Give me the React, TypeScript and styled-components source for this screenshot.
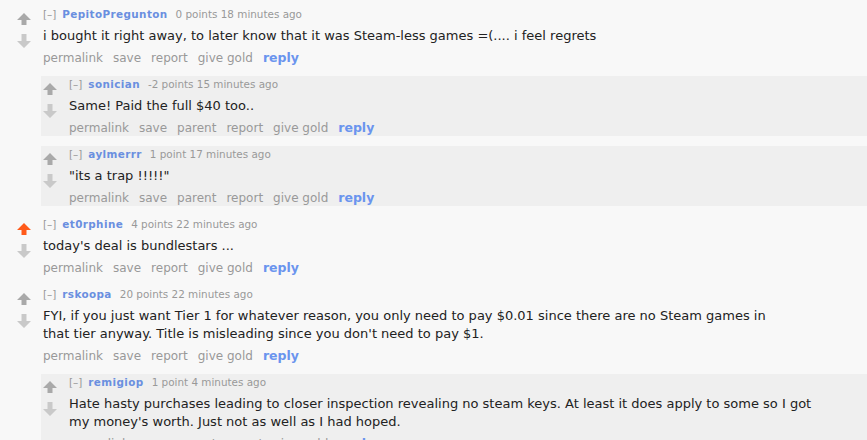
import React from "react";
import styled, { createGlobalStyle } from "styled-components";

const Global = createGlobalStyle`
  html, body { margin: 0; padding: 0; background: #f8f8f8; }
  body { font-family: "DejaVu Sans", Verdana, sans-serif; overflow: hidden; }
`;

type C = {
  author: string;
  score: string;
  time: string;
  body: string;
  upvoted?: boolean;
  parent?: boolean;
  children?: C[];
};

const data: C[] = [
  {
    author: "PepitoPregunton",
    score: "0 points",
    time: "18 minutes ago",
    body: "i bought it right away, to later know that it was Steam-less games =(.... i feel regrets",
    children: [
      { author: "sonician", score: "-2 points", time: "15 minutes ago", body: "Same! Paid the full $40 too..", parent: true },
      { author: "aylmerrr", score: "1 point", time: "17 minutes ago", body: "\"its a trap !!!!!\"", parent: true },
    ],
  },
  {
    author: "et0rphine",
    score: "4 points",
    time: "22 minutes ago",
    body: "today's deal is bundlestars ...",
    upvoted: true,
  },
  {
    author: "rskoopa",
    score: "20 points",
    time: "22 minutes ago",
    body: "FYI, if you just want Tier 1 for whatever reason, you only need to pay $0.01 since there are no Steam games in that tier anyway. Title is misleading since you don't need to pay $1.",
    children: [
      {
        author: "remigiop",
        score: "1 point",
        time: "4 minutes ago",
        body: "Hate hasty purchases leading to closer inspection revealing no steam keys. At least it does apply to some so I got my money's worth. Just not as well as I had hoped.",
        parent: true,
      },
    ],
  },
];

const Page = styled.div`
  display: flex;
  flex-direction: column;
`;

const CommentBox = styled.div<{ $nested: boolean }>`
  display: flex;
  flex-direction: column;
  padding: ${(p) => (p.$nested ? "1px 0 0 2px" : "7px 0 4px 17px")};
  background: ${(p) => (p.$nested ? "#efefef" : "transparent")};
`;

const Row = styled.div`
  display: flex;
  align-items: flex-start;
`;

const Votes = styled.div`
  width: 14px;
  flex: none;
  display: flex;
  flex-direction: column;
  align-items: center;
  gap: 7px;
  padding-top: 6px;
  margin-right: 12px;
`;

const Entry = styled.div`
  display: flex;
  flex-direction: column;
  min-width: 0;
`;

const Tagline = styled.div`
  font-size: 10.4px;
  line-height: 14px;
  color: #999;
  white-space: nowrap;
`;

const Toggle = styled.span`
  color: #999;
  margin-right: 6px;
`;

const Author = styled.span`
  color: #6a8fe0;
  font-weight: bold;
  letter-spacing: 0.4px;
  margin-right: 8px;
`;

const Body = styled.div`
  margin-top: 6px;
  font-size: 13px;
  line-height: 18px;
  color: #222;
  max-width: 750px;
`;

const Buttons = styled.ul`
  list-style: none;
  margin: 5px 0 0;
  padding: 0;
  display: flex;
  align-items: baseline;
  gap: 10px;
  line-height: 16px;
`;

const Btn = styled.li<{ $primary?: boolean }>`
  font-size: ${(p) => (p.$primary ? "12.5px" : "12px")};
  font-weight: ${(p) => (p.$primary ? "bold" : "normal")};
  color: ${(p) => (p.$primary ? "#6a94ee" : "#999")};
`;

const Children = styled.div`
  display: flex;
  flex-direction: column;
  gap: 10px;
  margin: 10px 0 0 24px;
`;

const Arrow = ({ up, color }: { up: boolean; color: string }) => (
  <svg width="14" height="14" viewBox="0 0 14 14" style={{ display: "block" }}>
    {up ? (
      <polygon points="7,0 14,7 9.5,7 9.5,12 4.5,12 4.5,7 0,7" fill={color} />
    ) : (
      <polygon points="4.5,0 9.5,0 9.5,7 14,7 7,14 0,7 4.5,7" fill={color} />
    )}
  </svg>
);

const Comment = ({ c, nested }: { c: C; nested: boolean }) => (
  <CommentBox $nested={nested}>
    <Row>
      <Votes>
        <Arrow up color={c.upvoted ? "#ff5a1a" : "#a9a9a9"} />
        <Arrow up={false} color="#c9c9c9" />
      </Votes>
      <Entry>
        <Tagline>
          <Toggle>[–]</Toggle>
          <Author>{c.author}</Author>
          {c.score} {c.time}
        </Tagline>
        <Body>{c.body}</Body>
        <Buttons>
          <Btn>permalink</Btn>
          <Btn>save</Btn>
          {c.parent && <Btn>parent</Btn>}
          <Btn>report</Btn>
          <Btn>give gold</Btn>
          <Btn $primary>reply</Btn>
        </Buttons>
      </Entry>
    </Row>
    {c.children && (
      <Children>
        {c.children.map((ch) => (
          <Comment key={ch.author} c={ch} nested />
        ))}
      </Children>
    )}
  </CommentBox>
);

export default function App() {
  return (
    <>
      <Global />
      <Page>
        {data.map((c) => (
          <Comment key={c.author} c={c} nested={false} />
        ))}
      </Page>
    </>
  );
}
